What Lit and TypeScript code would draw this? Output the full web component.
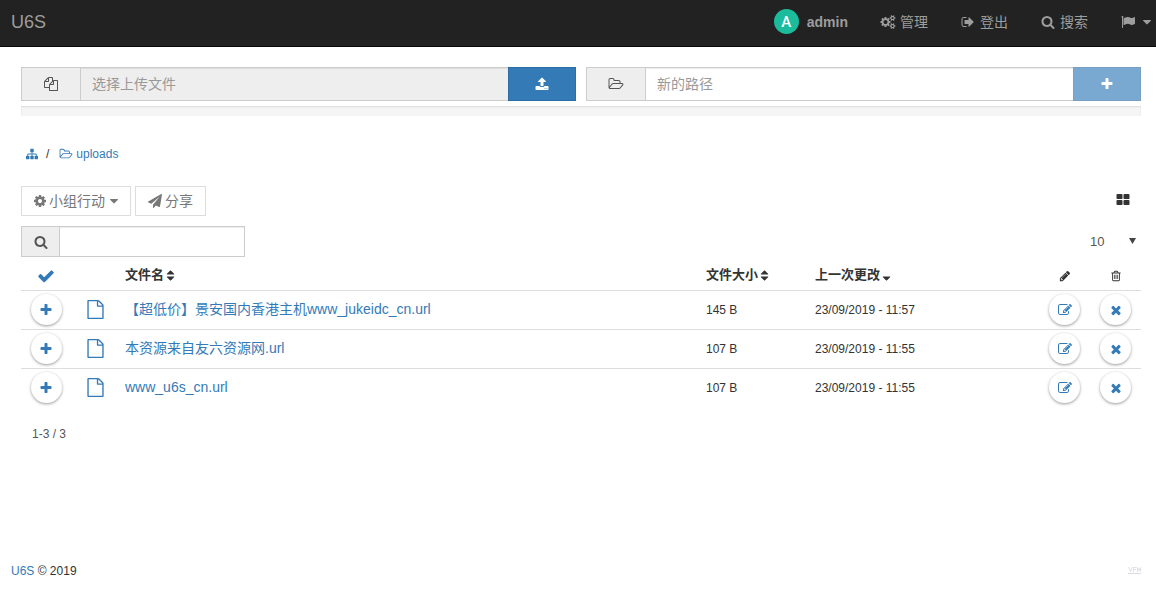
import { LitElement, html, css, svg } from "lit";
import { customElement, property, state } from "lit/decorators.js";

const gearTeeth =
  "140q0 16-149 31-12 27-30 52 51 113 51 138 0 4-4 7-122 71-124 71-8 0-46-47t-52-68q-20 2-30 2t-30-2q-14 21-52 68t-46 47q-2 0-124-71-4-3-4-7 0-25 51-138-18-25-30-52-149-15-149-31v-140q0-16 149-31 13-29 30-52-51-113-51-138 0-4 4-7 4-2 35-20t59-34 30-16q8 0 46 46.5t52 67.5q20-2 30-2t30 2q51-71 92-112l6-2q4 0 124 70 4 3 4 7 0 25-51 138 17 23 30 52 149 15 149 31z";
const slot = "v576q0 14-9 23t-23 9h-64q-14 0-23-9t-9-23v-576q0-14 9-23t23-9h64q14 0 23 9t9 23z";
const tile = "v384q0 52-38 90t-90 38h-512q-52 0-90-38t-38-90v-384q0-52 38-90t90-38h512q52 0 90 38t38 90z";

const ICONS: Record<string, string> = {
  cogs:
    "M832 896q0-106-75-181t-181-75-181 75-75 181 75 181 181 75 181-75 75-181zm768 512q0-52-38-90t-90-38-90 38-38 90q0 53 37.5 90.5t90.5 37.5 90.5-37.5 37.5-90.5zm0-1024q0-52-38-90t-90-38-90 38-38 90q0 53 37.5 90.5t90.5 37.5 90.5-37.5 37.5-90.5zm-384 421v185q0 10-7 19.5t-16 10.5l-155 24q-11 35-32 76 34 48 90 115 7 11 7 20 0 12-7 19-23 30-82.5 89.5t-78.5 59.5q-11 0-21-7l-115-90q-37 19-77 31-11 108-23 155-7 24-30 24h-186q-11 0-20-7.5t-10-17.5l-23-153q-34-10-75-31l-118 89q-7 7-20 7-11 0-21-8-144-133-144-160 0-9 7-19 10-14 41-53t47-61q-23-44-35-82l-152-24q-10-1-17-9.5t-7-19.5v-185q0-10 7-19.5t16-10.5l155-24q11-35 32-76-34-48-90-115-7-11-7-20 0-12 7-20 22-30 82-89t79-59q11 0 21 7l115 90q34-18 77-32 11-108 23-154 7-24 30-24h186q11 0 20 7.5t10 17.5l23 153q34 10 75 31l118-89q8-7 20-7 11 0 21 8 144 133 144 160 0 8-7 19-12 16-42 54t-45 60q23 48 34 82l152 23q10 2 17 10.5t7 19.5z" +
    "M1856 1338v" + gearTeeth + "M1856 314v" + gearTeeth,
  signOut:
    "M704 1440q0 4 1 20t.5 26.5-3 23.5-10 19.5-20.5 6.5h-320q-119 0-203.5-84.5t-84.5-203.5v-704q0-119 84.5-203.5t203.5-84.5h320q13 0 22.5 9.5t9.5 22.5q0 4 1 20t.5 26.5-3 23.5-10 19.5-20.5 6.5h-320q-66 0-113 47t-47 113v704q0 66 47 113t113 47h312l11.5 1 11.5 3 8 5.5 7 9 2 13.5zm928-544q0 26-19 45l-544 544q-19 19-45 19t-45-19-19-45v-288h-448q-26 0-45-19t-19-45v-384q0-26 19-45t45-19h448v-288q0-26 19-45t45-19 45 19l544 544q19 19 19 45z",
  search:
    "M1216 832q0-185-131.5-316.5t-316.5-131.5-316.5 131.5-131.5 316.5 131.5 316.5 316.5 131.5 316.5-131.5 131.5-316.5zm512 832q0 52-38 90t-90 38q-54 0-90-38l-343-342q-179 124-399 124-143 0-273.5-55.5t-225-150-150-225-55.5-273.5 55.5-273.5 150-225 225-150 273.5-55.5 273.5 55.5 225 150 150 225 55.5 273.5q0 220-124 399l343 343q37 37 37 90z",
  flag:
    "M320 256q0 72-64 110v1266q0 13-9.5 22.5t-22.5 9.5h-64q-13 0-22.5-9.5t-9.5-22.5v-1266q-64-38-64-110 0-53 37.5-90.5t90.5-37.5 90.5 37.5 37.5 90.5zm1472 64v763q0 25-12.5 38.5t-39.5 27.5q-215 116-369 116-61 0-123.5-22t-108.5-48-115.5-48-142.5-22q-192 0-464 146-17 9-33 9-26 0-45-19t-19-45v-742q0-32 31-55 21-14 79-43 236-120 421-120 107 0 200 29t219 88q38 19 88 19 54 0 117.5-21t110-47 88-47 54.5-21q26 0 45 19t19 45z",
  files:
    "M1696 384q40 0 68 28t28 68v1216q0 40-28 68t-68 28h-960q-40 0-68-28t-28-68v-288h-544q-40 0-68-28t-28-68v-672q0-40 20-88t48-76l408-408q28-28 76-48t88-20h416q40 0 68 28t28 68v328q68-40 128-40h416zm-544 213l-299 299h299v-299zm-640-384l-299 299h299v-299zm196 647l316-316v-416h-384v416q0 40-28 68t-68 28h-416v640h512v-256q0-40 20-88t48-76zm956 804v-1152h-384v416q0 40-28 68t-68 28h-416v640h896z",
  upload:
    "M1344 1472q0-26-19-45t-45-19-45 19-19 45 19 45 45 19 45-19 19-45zm256 0q0-26-19-45t-45-19-45 19-19 45 19 45 45 19 45-19 19-45zm128-224v320q0 40-28 68t-68 28h-1472q-40 0-68-28t-28-68v-320q0-40 28-68t68-28h427q21 56 70.5 92t110.5 36h256q61 0 110.5-36t70.5-92h427q40 0 68 28t28 68zm-325-648q-17 40-59 40h-256v448q0 26-19 45t-45 19h-256q-26 0-45-19t-19-45v-448h-256q-42 0-59-40-17-39 14-69l448-448q18-19 45-19t45 19l448 448q31 30 14 69z",
  folder:
    "M1717 931q0-35-53-35h-1088q-40 0-85.5 21.5t-71.5 52.5l-294 363q-18 24-18 40 0 35 53 35h1088q40 0 86-22t71-53l294-363q18-22 18-39zm-1141-163h768v-160q0-40-28-68t-68-28h-576q-40 0-68-28t-28-68v-64q0-40-28-68t-68-28h-320q-40 0-68 28t-28 68v853l256-315q44-53 116-87.5t140-34.5zm1269 163q0 62-46 120l-295 363q-43 53-116 87.5t-140 34.5h-1088q-92 0-158-66t-66-158v-960q0-92 66-158t158-66h320q92 0 158 66t66 158v32h544q92 0 158 66t66 158v160h192q54 0 99 24.5t67 70.5q15 32 15 68z",
  plus:
    "M1600 736v192q0 40-28 68t-68 28h-416v416q0 40-28 68t-68 28h-192q-40 0-68-28t-28-68v-416h-416q-40 0-68-28t-28-68v-192q0-40 28-68t68-28h416v-416q0-40 28-68t68-28h192q40 0 68 28t28 68v416h416q40 0 68 28t28 68z",
  sitemap:
    "M1792 1248v320q0 40-28 68t-68 28h-320q-40 0-68-28t-28-68v-320q0-40 28-68t68-28h96v-192h-512v192h96q40 0 68 28t28 68v320q0 40-28 68t-68 28h-320q-40 0-68-28t-28-68v-320q0-40 28-68t68-28h96v-192h-512v192h96q40 0 68 28t28 68v320q0 40-28 68t-68 28h-320q-40 0-68-28t-28-68v-320q0-40 28-68t68-28h96v-192q0-52 38-90t90-38h512v-192h-96q-40 0-68-28t-28-68v-320q0-40 28-68t68-28h320q40 0 68 28t28 68v320q0 40-28 68t-68 28h-96v192h512q52 0 90 38t38 90v192h96q40 0 68 28t28 68z",
  cog:
    "M1152 896q0-106-75-181t-181-75-181 75-75 181 75 181 181 75 181-75 75-181zm512-109v222q0 12-8 23t-20 13l-185 28q-19 54-39 91 35 50 107 138 10 12 10 25t-9 23q-27 37-99 108t-94 71q-12 0-26-9l-138-108q-44 23-91 38-16 136-29 186-7 28-36 28h-222q-14 0-24.5-8.5t-11.5-21.5l-28-184q-49-16-90-37l-141 107q-10 9-25 9-14 0-25-11-126-114-165-168-7-10-7-23 0-12 8-23 15-21 51-66.5t54-70.5q-27-50-41-99l-183-27q-13-2-21-12.5t-8-23.5v-222q0-12 8-23t19-13l186-28q14-46 39-92-40-57-107-138-10-12-10-24 0-10 9-23 26-36 98.5-107.5t94.5-71.5q13 0 26 10l138 107q44-23 91-38 16-136 29-186 7-28 36-28h222q14 0 24.5 8.5t11.5 21.5l28 184q49 16 90 37l142-107q9-9 24-9 13 0 25 10 129 119 165 170 7 8 7 22 0 12-8 23-15 21-51 66.5t-54 70.5q26 50 41 98l183 28q13 2 21 12.5t8 23.5z",
  plane:
    "M1764 11q33 24 27 64l-256 1536q-5 29-32 45-14 8-31 8-11 0-24-5l-453-185-242 295q-18 23-49 23-13 0-22-4-19-7-30.5-23.5t-11.5-36.5v-349l864-1059-1069 925-395-162q-37-14-40-55-2-40 32-59l1664-960q15-9 32-9 20 0 36 11z",
  grid: "M832 1024" + tile + "M832 256" + tile + "M1728 1024" + tile + "M1728 256" + tile,
  check:
    "M1671 566q0 40-28 68l-724 724-136 136q-28 28-68 28t-68-28l-136-136-362-362q-28-28-28-68t28-68l136-136q28-28 68-28t68 28l294 295 656-657q28-28 68-28t68 28l136 136q28 28 28 68z",
  sort:
    "M1408 1088q0 26-19 45l-448 448q-19 19-45 19t-45-19l-448-448q-19-19-19-45t19-45 45-19h896q26 0 45 19t19 45zm0-384q0 26-19 45t-45 19h-896q-26 0-45-19t-19-45 19-45l448-448q19-19 45-19t45 19l448 448q19 19 19 45z",
  sortDown:
    "M1408 1088q0 26-19 45l-448 448q-19 19-45 19t-45-19l-448-448q-19-19-19-45t19-45 45-19h896q26 0 45 19t19 45z",
  caret: "M1408 704q0 26-19 45l-448 448q-19 19-45 19t-45-19l-448-448q-19-19-19-45t19-45 45-19h896q26 0 45 19t19 45z",
  pencil:
    "M491 1536l91-91-235-235-91 91v107h128v128h107zm523-928q0-22-22-22-10 0-17 7l-542 542q-7 7-7 17 0 22 22 22 10 0 17-7l542-542q7-7 7-17zm-54-192l416 416-832 832h-416v-416zm683 96q0 53-37 90l-166 166-416-416 166-165q36-38 90-38 53 0 91 38l235 234q37 39 37 91z",
  trash:
    "M704 736" + slot + "M960 736" + slot + "M1216 736" + slot +
    "M1344 1460v-948h-896v948q0 22 7 40.5t14.5 27 10.5 8.5h832q3 0 10.5-8.5t14.5-27 7-40.5zm-672-1076h448l-48-117q-7-9-17-11h-317q-10 2-17 11zm928 32v64q0 14-9 23t-23 9h-96v948q0 83-47 143.5t-113 60.5h-832q-66 0-113-58.5t-47-141.5v-952h-96q-14 0-23-9t-9-23v-64q0-14 9-23t23-9h309l70-167q15-37 54-63t79-26h320q40 0 79 26t54 63l70 167h309q14 0 23 9t9 23z",
  file:
    "M1596 380q28 28 48 76t20 88v1152q0 40-28 68t-68 28h-1344q-40 0-68-28t-28-68v-1600q0-40 28-68t68-28h896q40 0 88 20t76 48zm-444-244v376h376q-10-29-22-41l-313-313q-12-12-41-22zm384 1528v-1024h-416q-40 0-68-28t-28-68v-416h-768v1536h1280z",
  edit:
    "M888 1184l116-116-152-152-116 116v56h96v96h56zm440-720q-16-16-33 1l-350 350q-17 17-1 33t33-1l350-350q17-17 1-33zm80 594v190q0 119-84.5 203.5t-203.5 84.5h-832q-119 0-203.5-84.5t-84.5-203.5v-832q0-119 84.5-203.5t203.5-84.5h832q63 0 117 25 15 7 18 23 3 17-9 29l-49 49q-14 14-32 8-23-6-45-6h-832q-66 0-113 47t-47 113v832q0 66 47 113t113 47h832q66 0 113-47t47-113v-126q0-13 9-22l64-64q15-15 35-7t20 29zm-96-738l288 288-672 672h-288v-288zm444 132l-92 92-288-288 92-92q28-28 68-28t68 28l152 152q28 28 28 68t-28 68z",
  times:
    "M1490 1322q0 40-28 68l-136 136q-28 28-68 28t-68-28l-294-294-294 294q-28 28-68 28t-68-28l-136-136q-28-28-28-68t28-68l294-294-294-294q-28-28-28-68t28-68l136-136q28-28 68-28t68 28l294 294 294-294q28-28 68-28t68 28l136 136q28 28 28 68t-28 68l-294 294 294 294q28 28 28 68z",
};

@customElement("fm-icon")
export class FmIcon extends LitElement {
  @property() name = "";

  static styles = css`
    :host {
      display: inline-flex;
      flex: none;
      width: 14px;
      height: 14px;
    }
    .glyph {
      display: block;
      width: 100%;
      height: 100%;
      fill: currentColor;
      overflow: visible;
    }
  `;

  render() {
    return html`<svg class="glyph" viewBox="0 0 1792 1792" aria-hidden="true">
      ${svg`<path d=${ICONS[this.name] ?? ""}></path>`}
    </svg>`;
  }
}

interface FileRow {
  name: string;
  size: string;
  changed: string;
}

@customElement("app-root")
export class AppRoot extends LitElement {
  @state() private files: FileRow[] = [
    { name: "【超低价】景安国内香港主机www_jukeidc_cn.url", size: "145 B", changed: "23/09/2019 - 11:57" },
    { name: "本资源来自友六资源网.url", size: "107 B", changed: "23/09/2019 - 11:55" },
    { name: "www_u6s_cn.url", size: "107 B", changed: "23/09/2019 - 11:55" },
  ];

  static styles = css`
    :host {
      display: flex;
      flex-direction: column;
      min-height: 100vh;
      box-sizing: border-box;
      background: #fff;
      color: #333;
      font: 12px/18px "Liberation Sans", "Noto Sans CJK SC", sans-serif;
    }
    *, *::before, *::after { box-sizing: border-box; }
    a { color: #337ab7; text-decoration: none; }
    button, input, select { font: inherit; color: inherit; margin: 0; border-radius: 0; }
    button { cursor: pointer; padding: 0; border: 0; background: none; }
    input { min-width: 0; outline: 0; }

    .navbar {
      display: flex;
      align-items: center;
      justify-content: space-between;
      height: 47px;
      padding: 0 2px 3px 11px;
      background: #222;
      border-bottom: 1px solid #080808;
      color: #9d9d9d;
      font-size: 14px;
      line-height: 20px;
    }
    .navbar a, .navbar button { color: #9d9d9d; }
    .brand { font-size: 18px; }
    .menu { display: flex; align-items: center; gap: 33px; }
    .item { display: flex; align-items: center; gap: 5px; }
    .user { gap: 8px; font-weight: bold; }
    .navbar .avatar {
      display: grid;
      place-items: center;
      width: 25px;
      height: 25px;
      border-radius: 50%;
      background: #1abc9c;
      color: #fff;
      font: 500 15px/20px Roboto, "Liberation Sans", sans-serif;
    }

    .page { padding: 20px 15px 0 21px; flex: 1; }
    .forms { display: grid; grid-template-columns: 1fr 1fr; gap: 10px; }
    .group { display: flex; height: 34px; font-size: 14px; }
    .addon {
      display: grid;
      place-items: center;
      width: 59px;
      flex: none;
      border: 1px solid #ccc;
      border-right: 0;
      background: #eee;
      color: #555;
    }
    .field {
      flex: 1;
      border: 1px solid #ccc;
      padding: 0 11px;
      background: #fff;
      box-shadow: inset 0 1px 1px rgba(0, 0, 0, 0.075);
    }
    .field.locked { background: #eee; }
    .group .field { border-right: 0; }
    .field::placeholder { color: #999; opacity: 1; }
    .action {
      display: grid;
      place-items: center;
      width: 68px;
      flex: none;
      border: 1px solid #2e6da4;
      background: #337ab7;
      color: #fff;
    }
    .action:disabled { opacity: 0.65; cursor: default; }
    .progress {
      height: 10px;
      margin-top: 5px;
      background: #f5f5f5;
      box-shadow: inset 0 1px 2px rgba(0, 0, 0, 0.1);
    }

    .crumbs { display: flex; align-items: center; gap: 8px; margin-top: 29px; padding-left: 5px; }
    .crumbs fm-icon { width: 12px; height: 12px; }
    .crumbs a { display: flex; align-items: center; gap: 4px; }
    .crumbs .current { margin-left: 3px; }

    .toolbar { display: flex; justify-content: space-between; align-items: center; margin-top: 23px; }
    .tools { display: flex; gap: 4px; }
    .tool {
      display: flex;
      align-items: center;
      gap: 3px;
      height: 30px;
      padding: 0 12px;
      border: 1px solid #ddd;
      background: #fff;
      color: #777;
      font-size: 14px;
    }
    .gear { margin: 0 -1px; }
    .tool .caret { margin: 0 -3px 0 -1px; }
    .view { padding: 0 11px 2px 0; display: flex; }

    .filter { display: flex; justify-content: space-between; align-items: center; margin-top: 10px; }
    .filter .group { height: 31px; width: 224px; }
    .filter .addon { width: 38px; }
    .filter .field { border-right: 1px solid #ccc; }
    .length { display: flex; align-items: center; color: #555; }
    .length select {
      appearance: none;
      border: 0;
      background: transparent;
      width: 52px;
      padding: 0;
      margin-right: -13px;
      font-size: 13px;
    }
    .length .arrow { width: 7px; height: 6px; fill: #444; margin: 0 5px 2px 0; pointer-events: none; }

    .list { width: 100%; table-layout: fixed; border-collapse: collapse; }
    .c-select { width: 50px; }
    .c-icon { width: 49px; }
    .c-size { width: 109px; }
    .c-date { width: 229px; }
    .c-act { width: 51px; }
    th, td { height: 39px; padding: 0 5px; text-align: left; border-bottom: 1px solid #ddd; }
    th { height: 33px; padding-top: 4px; font-size: 13px; }
    tbody tr:last-child td { border-bottom: 0; }
    .mid { text-align: center; }
    .mid > * { vertical-align: middle; }
    .sort { display: inline-flex; align-items: center; font-weight: bold; }
    .mark { width: 13px; height: 13px; }
    .all { color: #337ab7; }
    .all fm-icon { width: 18px; height: 18px; display: block; }
    .small { width: 12px; height: 12px; }
    .doc { display: inline-block; width: 19px; height: 19px; color: #337ab7; }
    .name { font-size: 14px; }
    .round {
      display: inline-grid;
      place-items: center;
      width: 31px;
      height: 31px;
      border-radius: 50%;
      color: #337ab7;
      background: #fff;
      box-shadow: 0 1px 3px rgba(0, 0, 0, 0.4);
    }

    .info { margin: 18px 0 0 11px; color: #555; }
    .footer {
      display: flex;
      justify-content: space-between;
      align-items: center;
      padding: 0 15px 26px 11px;
    }
    .stamp { width: 13px; height: 8px; display: block; fill: none; }
  `;

  private entry(f: FileRow) {
    return html`<tr>
      <td class="mid"><button class="round" aria-label="选择"><fm-icon name="plus"></fm-icon></button></td>
      <td class="mid"><fm-icon class="doc" name="file"></fm-icon></td>
      <td><a class="name" href="#">${f.name}</a></td>
      <td>${f.size}</td>
      <td>${f.changed}</td>
      <td class="mid"><button class="round" aria-label="编辑"><fm-icon name="edit"></fm-icon></button></td>
      <td class="mid"><button class="round" aria-label="删除"><fm-icon name="times"></fm-icon></button></td>
    </tr>`;
  }

  render() {
    return html`
      <nav class="navbar">
        <a class="brand" href="#">U6S</a>
        <div class="menu">
          <a class="item user" href="#"><span class="avatar">A</span>admin</a>
          <a class="item" href="#"><fm-icon name="cogs"></fm-icon>管理</a>
          <a class="item" href="#"><fm-icon name="signOut"></fm-icon>登出</a>
          <a class="item" href="#"><fm-icon name="search"></fm-icon>搜索</a>
          <button class="item" aria-label="语言">
            <fm-icon name="flag"></fm-icon><fm-icon name="caret"></fm-icon>
          </button>
        </div>
      </nav>

      <main class="page">
        <div class="forms">
          <div class="group">
            <label class="addon" for="upload"><fm-icon name="files"></fm-icon></label>
            <input class="field locked" id="upload" readonly placeholder="选择上传文件" />
            <button class="action" aria-label="上传"><fm-icon name="upload"></fm-icon></button>
          </div>
          <div class="group">
            <label class="addon" for="folder"><fm-icon name="folder"></fm-icon></label>
            <input class="field" id="folder" placeholder="新的路径" />
            <button class="action" disabled aria-label="新建"><fm-icon name="plus"></fm-icon></button>
          </div>
        </div>
        <div class="progress"></div>

        <nav class="crumbs">
          <a href="#" aria-label="根目录"><fm-icon name="sitemap"></fm-icon></a>
          <span>/</span>
          <a class="current" href="#"><fm-icon name="folder"></fm-icon>uploads</a>
        </nav>

        <div class="toolbar">
          <div class="tools">
            <button class="tool"><fm-icon class="gear" name="cog"></fm-icon>小组行动<fm-icon class="caret" name="caret"></fm-icon></button>
            <button class="tool"><fm-icon name="plane"></fm-icon>分享</button>
          </div>
          <button class="view" aria-label="网格"><fm-icon name="grid"></fm-icon></button>
        </div>

        <div class="filter">
          <div class="group">
            <label class="addon" for="find"><fm-icon name="search"></fm-icon></label>
            <input class="field" id="find" type="search" />
          </div>
          <label class="length">
            <select aria-label="每页数量">
              <option>10</option>
              <option>25</option>
              <option>50</option>
            </select>
            <svg class="arrow" viewBox="0 0 7 6" aria-hidden="true"><path d="M0 0h7L3.5 6z"></path></svg>
          </label>
        </div>

        <table class="list">
          <colgroup>
            <col class="c-select" /><col class="c-icon" /><col />
            <col class="c-size" /><col class="c-date" /><col class="c-act" /><col class="c-act" />
          </colgroup>
          <thead>
            <tr>
              <th class="mid"><button class="all" aria-label="全选"><fm-icon name="check"></fm-icon></button></th>
              <th></th>
              <th><button class="sort">文件名<fm-icon class="mark" name="sort"></fm-icon></button></th>
              <th><button class="sort">文件大小<fm-icon class="mark" name="sort"></fm-icon></button></th>
              <th><button class="sort">上一次更改<fm-icon class="mark" name="sortDown"></fm-icon></button></th>
              <th class="mid"><fm-icon class="small" name="pencil"></fm-icon></th>
              <th class="mid"><fm-icon class="small" name="trash"></fm-icon></th>
            </tr>
          </thead>
          <tbody>
            ${this.files.map((f) => this.entry(f))}
          </tbody>
        </table>
        <p class="info">1-3 / 3</p>
      </main>

      <footer class="footer">
        <span><a href="#">U6S</a> © 2019</span>
        <svg class="stamp" viewBox="0 0 13 8" aria-hidden="true">
          <path stroke="#dde2ea" d="M.5 0l2 4.500 2-4.500M5.500 5V.5h3M5.500 2.500h2.500M9.500 5V.5l1.500 3 1.500-3V5"></path>
          <path stroke="#dcdae6" d="M0 6.500h13"></path>
        </svg>
      </footer>
    `;
  }
}
